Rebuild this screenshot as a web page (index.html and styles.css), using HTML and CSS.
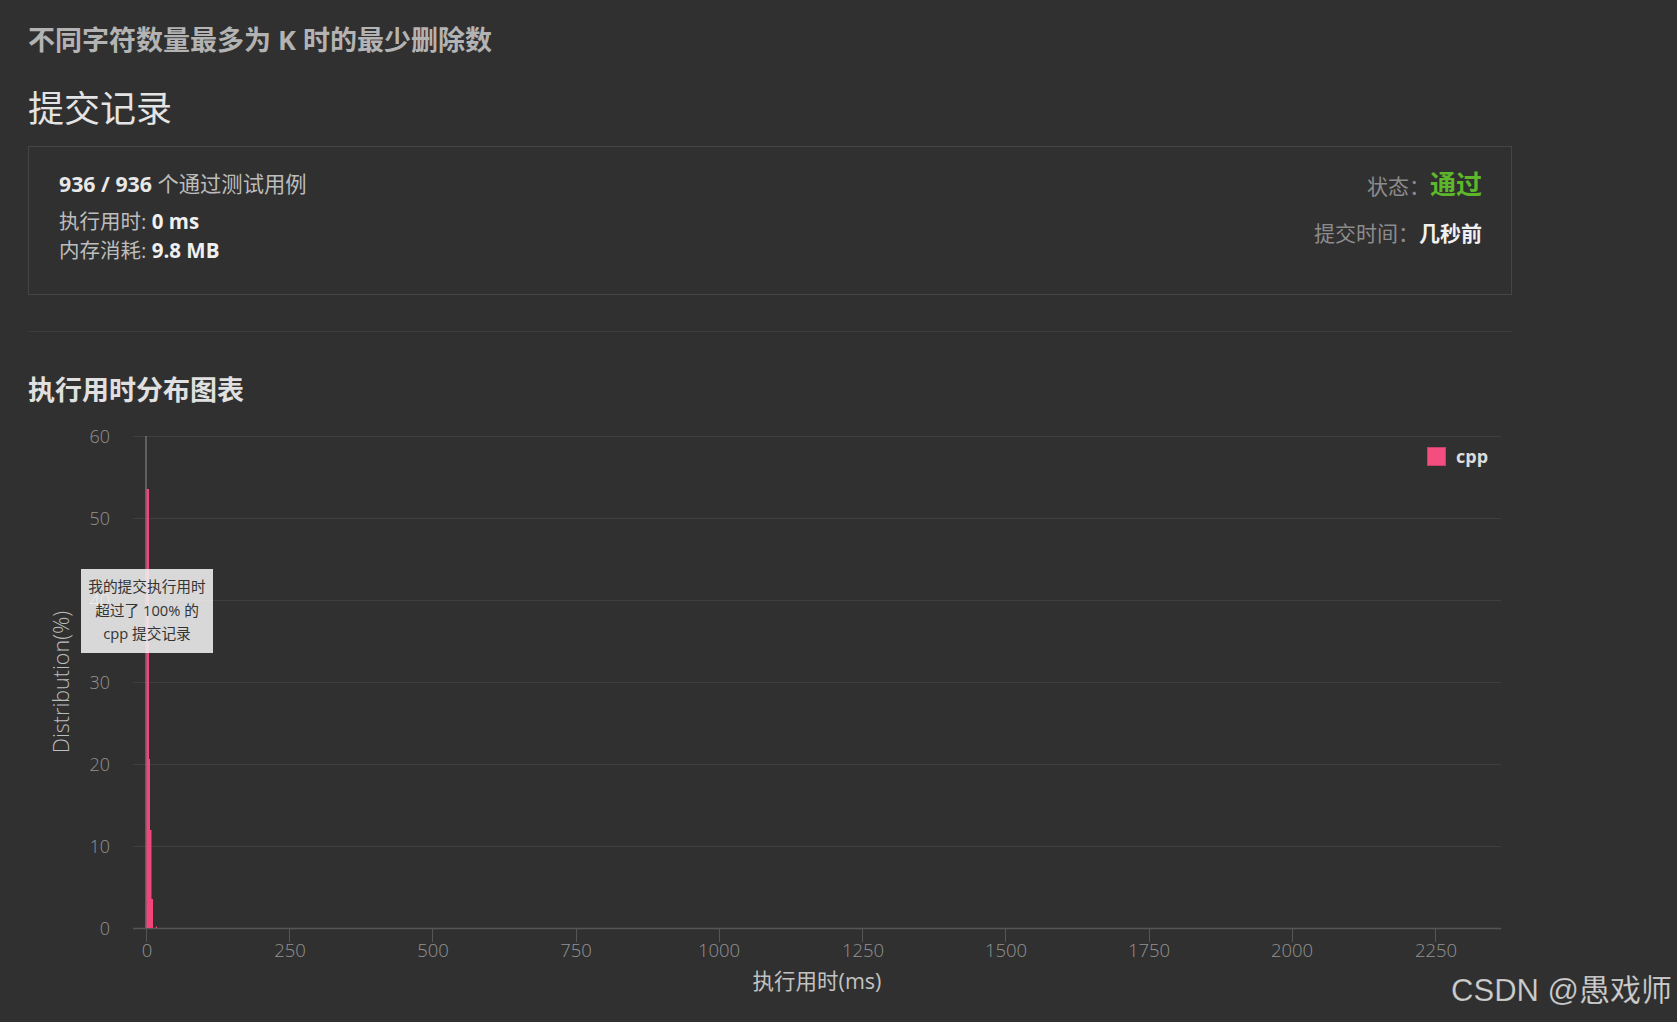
FILE: index.html
```html
<!DOCTYPE html>
<html lang="zh-CN">
<head>
<meta charset="utf-8">
<title>提交记录</title>
<link rel="stylesheet" href="styles.css">
</head>
<body>
<div class="page">
  <h1 class="problem-title">不同字符数量最多为 K 时的最少删除数</h1>
  <h2 class="section-title">提交记录</h2>
  <div class="result-card">
    <div class="result-left">
      <div class="line-cases"><b class="num">936 / 936</b> 个通过测试用例</div>
      <div class="line-stat">执行用时: <b>0 ms</b></div>
      <div class="line-stat">内存消耗: <b>9.8 MB</b></div>
    </div>
    <div class="result-right">
      <div class="row-status"><span class="label">状态：</span><span class="status-ok">通过</span></div>
      <div class="row-time"><span class="label">提交时间：</span><b class="time-val">几秒前</b></div>
    </div>
  </div>
  <div class="divider"></div>
  <h3 class="chart-title">执行用时分布图表</h3>
</div>
<svg class="chart" width="1677" height="600" viewBox="0 0 1677 600" xmlns="http://www.w3.org/2000/svg">
  <g class="grid">
    <line x1="133" y1="16.5" x2="1501" y2="16.5"/>
    <line x1="133" y1="98.5" x2="1501" y2="98.5"/>
    <line x1="133" y1="180.5" x2="1501" y2="180.5"/>
    <line x1="133" y1="262.5" x2="1501" y2="262.5"/>
    <line x1="133" y1="344.5" x2="1501" y2="344.5"/>
    <line x1="133" y1="426.5" x2="1501" y2="426.5"/>
  </g>
  <line class="axis" x1="133" y1="508.5" x2="1501" y2="508.5"/>
  <g class="ticks">
    <line x1="146.5" y1="508" x2="146.5" y2="522"/>
    <line x1="289.5" y1="508" x2="289.5" y2="522"/>
    <line x1="432.5" y1="508" x2="432.5" y2="522"/>
    <line x1="576.5" y1="508" x2="576.5" y2="522"/>
    <line x1="719.5" y1="508" x2="719.5" y2="522"/>
    <line x1="862.5" y1="508" x2="862.5" y2="522"/>
    <line x1="1005.5" y1="508" x2="1005.5" y2="522"/>
    <line x1="1149.5" y1="508" x2="1149.5" y2="522"/>
    <line x1="1292.5" y1="508" x2="1292.5" y2="522"/>
    <line x1="1435.5" y1="508" x2="1435.5" y2="522"/>
  </g>
  <g class="ylabels">
    <text x="110" y="22.5">60</text>
    <text x="110" y="104.5">50</text>
    <text x="110" y="268.5">30</text>
    <text x="110" y="350.5">20</text>
    <text x="110" y="432.5">10</text>
    <text x="110" y="514.5">0</text>
  </g>
  <g class="xlabels">
    <text x="147" y="536.5">0</text>
    <text x="290" y="536.5">250</text>
    <text x="433" y="536.5">500</text>
    <text x="576" y="536.5">750</text>
    <text x="719" y="536.5">1000</text>
    <text x="863" y="536.5">1250</text>
    <text x="1006" y="536.5">1500</text>
    <text x="1149" y="536.5">1750</text>
    <text x="1292" y="536.5">2000</text>
    <text x="1436" y="536.5">2250</text>
  </g>
  <text class="xtitle" x="817" y="569">执行用时(ms)</text>
  <text class="ytitle" x="69" y="262" transform="rotate(-90 69 262)">Distribution(%)</text>
  <line class="marker" x1="146" y1="16" x2="146" y2="508"/>
  <g class="bars">
    <rect x="146.5" y="69" width="2.5" height="439"/>
    <rect x="148" y="339" width="2" height="169"/>
    <rect x="149.5" y="410" width="2" height="98"/>
    <rect x="151" y="479" width="2" height="29"/>
    <rect x="155.7" y="506.5" width="1.3" height="1.5"/>
  </g>
  <rect class="tip-bg" x="81" y="149" width="132" height="84"/>
  <g class="tip-text">
    <text x="147" y="172">我的提交执行用时</text>
    <text x="147" y="196">超过了 100% 的</text>
    <text x="147" y="219">cpp 提交记录</text>
  </g>
  <text class="ylabel-over" x="110" y="186.5">40</text>
  <rect class="legend-box" x="1427.5" y="27.5" width="18" height="18"/>
  <text class="legend-text" x="1456" y="43">cpp</text>
  <text class="watermark" x="1672" y="581">CSDN @愚戏师</text>
</svg>
</body>
</html>
```
FILE: styles.css
```css
html, body {
  margin: 0;
  padding: 0;
  background: #303030;
  overflow: hidden;
}
body {
  font-family: "Open Sans", "Noto Sans CJK SC", sans-serif;
  color: #bdbdbd;
}
.page {
  padding: 0 0 0 28px;
  width: 1484px;
  display: flow-root;
}
.problem-title {
  margin: 22px 0 0;
  font-size: 27px;
  line-height: 35px;
  font-weight: 700;
  color: #b3b3b3;
}
.section-title {
  margin: 30px 0 0;
  font-size: 36px;
  line-height: 44px;
  font-weight: 400;
  color: #e4e4e4;
}
.result-card {
  margin-top: 15px;
  box-sizing: border-box;
  height: 149px;
  border: 1px solid #454545;
  padding: 22px 29px 0 30px;
  display: flex;
  justify-content: space-between;
  align-items: flex-start;
}
.line-cases {
  font-size: 21.3px;
  line-height: 30px;
  color: #bdbdbd;
  margin-bottom: 8px;
  white-space: nowrap;
}
.line-cases .num {
  color: #e8e8e8;
}
.line-stat {
  font-size: 20.5px;
  line-height: 29px;
  color: #bdbdbd;
  white-space: nowrap;
}
.line-stat b {
  color: #f0f0f0;
}
.result-right {
  margin-top: -2px;
  text-align: right;
  font-size: 21px;
  line-height: 34px;
  white-space: nowrap;
}
.result-right .label {
  color: #8c8c8c;
}
.status-ok {
  font-size: 26px;
  font-weight: 700;
  color: #5cb82a;
}
.row-time {
  margin-top: 13px;
}
.time-val {
  color: #f0f0f0;
}
.divider {
  margin-top: 36px;
  height: 1px;
  background: #3c3c3c;
}
.chart-title {
  margin: 40px 0 0;
  font-size: 27px;
  line-height: 36px;
  font-weight: 700;
  color: #e0e0e0;
}
.chart {
  display: block;
  margin-top: 12px;
  overflow: visible;
}
.grid line {
  stroke: #3f3f3f;
  stroke-width: 1;
}
.axis {
  stroke: #555555;
  stroke-width: 1.5;
}
.ticks line {
  stroke: #555555;
  stroke-width: 1;
}
.ylabels text, .ylabel-over {
  font-family: "Open Sans", sans-serif;
  font-weight: 300;
  font-size: 18px;
  fill: #939393;
  text-anchor: end;
}
.ylabel-over {
  fill: rgba(255, 255, 255, 0.55);
}
.xlabels text {
  font-family: "Open Sans", sans-serif;
  font-weight: 300;
  font-size: 18.5px;
  fill: #939393;
  text-anchor: middle;
}
.xtitle {
  font-family: "Open Sans", "Noto Sans CJK SC", sans-serif;
  font-size: 21.5px;
  fill: #c2c2c2;
  text-anchor: middle;
}
.ytitle {
  font-family: "Open Sans", sans-serif;
  font-weight: 300;
  font-size: 21.5px;
  fill: #bdbdbd;
  text-anchor: middle;
}
.marker {
  stroke: #8f8f8f;
  stroke-width: 1;
}
.bars rect {
  fill: #f1457b;
}
.tip-bg {
  fill: #f5f5f5;
  fill-opacity: 0.86;
}
.tip-text text {
  font-family: "Open Sans", "Noto Sans CJK SC", sans-serif;
  font-size: 14.7px;
  fill: #333333;
  text-anchor: middle;
}
.legend-box {
  fill: #f44d80;
  stroke: #c8406a;
  stroke-width: 1;
}
.legend-text {
  font-family: "Open Sans", sans-serif;
  font-weight: 700;
  font-size: 18px;
  fill: #dcdcdc;
}
.watermark {
  font-family: "Liberation Sans", "Noto Sans CJK SC", sans-serif;
  font-size: 31px;
  fill: #cdcdcd;
  text-anchor: end;
  stroke: rgba(0, 0, 0, 0.25);
  stroke-width: 0.6;
}
```
